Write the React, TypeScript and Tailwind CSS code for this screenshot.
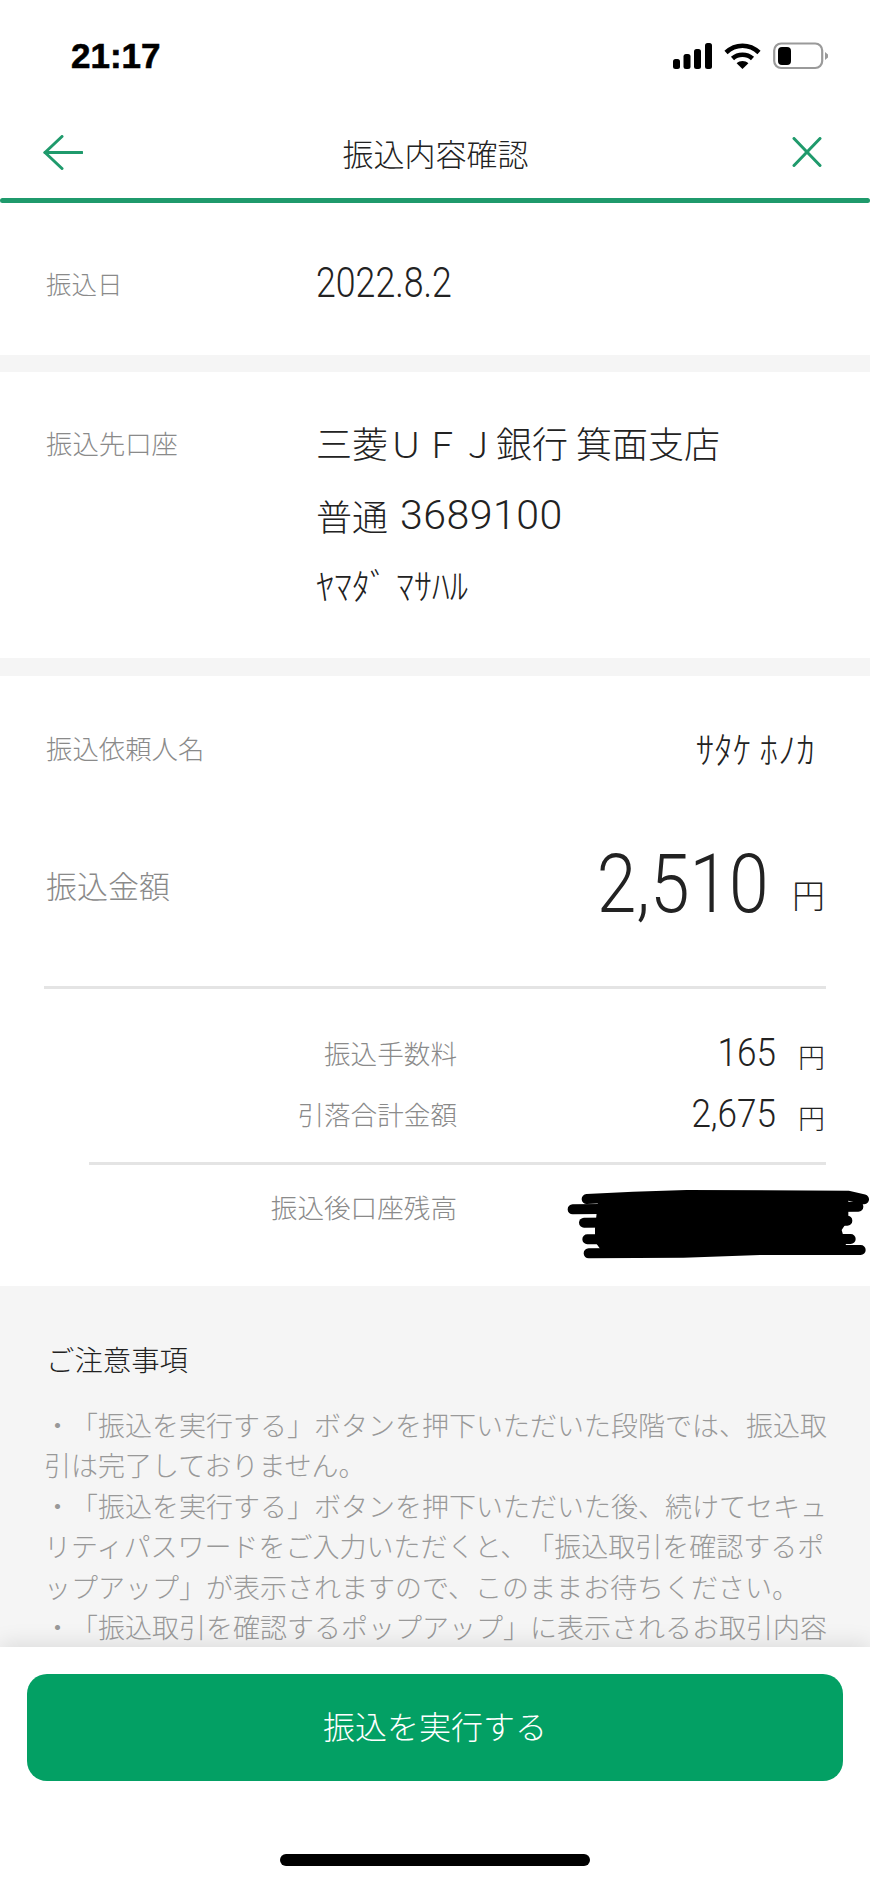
const noteLines = [
  '・「振込を実行する」ボタンを押下いただいた段階では、振込取',
  '引は完了しておりません。',
  '・「振込を実行する」ボタンを押下いただいた後、続けてセキュ',
  'リティパスワードをご入力いただくと、「振込取引を確認するポ',
  'ップアップ」が表示されますので、このままお待ちください。',
  '・「振込取引を確認するポップアップ」に表示されるお取引内容',
];

function StatusIcons() {
  return (
    <div className="flex items-center">
      <svg width="39" height="26" viewBox="0 0 39 26" fill="#000">
        <rect x="0" y="16" width="7" height="10" rx="2.5" />
        <rect x="10.5" y="11" width="7" height="15" rx="2.5" />
        <rect x="21" y="6" width="7" height="20" rx="2.5" />
        <rect x="32" y="0" width="7" height="26" rx="2.5" />
      </svg>
      <svg className="ml-[12px]" width="37" height="26" viewBox="0 0 37 26" fill="none" stroke="#000" strokeWidth="4.6">
        <path d="M2 9.5C11.5 0.5 25.5 0.5 35 9.5" />
        <path d="M8.5 15.5C14 10.5 23 10.5 28.5 15.5" />
        <path d="M18.5 26L12.6 20.2C16 17.4 21 17.4 24.4 20.2Z" fill="#000" stroke="none" />
      </svg>
      <svg className="ml-[12px]" width="56" height="28" viewBox="0 0 56 28" fill="none">
        <rect x="1.2" y="1.5" width="48" height="24.5" rx="7" stroke="#9a9a9a" strokeWidth="2.2" />
        <rect x="5" y="5" width="13" height="18" rx="4" fill="#000" />
        <path d="M52 10L55 12.5V15.5L52 18Z" fill="#9a9a9a" />
      </svg>
    </div>
  );
}

function Yen({ big = false }: { big?: boolean }) {
  return <span className={big ? 'mr-[1px] ml-[23px] text-[33px] leading-none font-light text-[#222] translate-y-[10px]' : 'mr-[1px] ml-[22px] text-[27px] leading-none font-light text-[#222] translate-y-[3px]'}>円</span>;
}

function SubRow({ label, value, className = '' }: { label: string; value?: string; className?: string }) {
  return (
    <div className={`flex h-[40px] items-center ${className}`}>
      <div className="w-[413px] text-right text-[26.6px] leading-none font-light text-[#8a8a8a]">{label}</div>
      {value && (
        <div className="flex flex-1 items-center justify-end">
          <span className="origin-right scale-x-[0.9] font-['Roboto',sans-serif] text-[39px] leading-none font-light text-[#222]">{value}</span>
          <Yen />
        </div>
      )}
    </div>
  );
}

export default function App() {
  return (
    <div className="flex h-[1883px] w-[870px] flex-col overflow-hidden bg-white font-['Noto_Sans_CJK_JP',sans-serif] [text-spacing-trim:space-all]">
      <div className="flex h-[100px] shrink-0 items-start justify-between pt-[42px] pr-[41px] pl-[71px]">
        <span className="font-['Liberation_Sans',sans-serif] text-[35px] leading-[27px] font-bold text-black [-webkit-text-stroke:0.6px_#000]">21:17</span>
        <StatusIcons />
      </div>

      <div className="flex h-[98px] shrink-0 items-center justify-between pt-[6px] pr-[48px] pl-[43px]">
        <svg width="40" height="35" viewBox="0 0 40 35" fill="none" stroke="#1f9a6c" strokeWidth="3" strokeLinecap="round" strokeLinejoin="round">
          <path d="M19 1.5L2 17.5L19 33.5" />
          <path d="M2 17.5H39" />
        </svg>
        <div className="-translate-x-[2px] text-[31px] leading-none font-light text-[#222]">振込内容確認</div>
        <svg width="30" height="30" viewBox="0 0 30 30" fill="none" stroke="#1f9a6c" strokeWidth="3" strokeLinecap="round">
          <path d="M2 1.5L28 28.5" />
          <path d="M28 1.5L2 28.5" />
        </svg>
      </div>
      <div className="h-[5px] shrink-0 rounded-full bg-[#1f9a6c]" />

      <div className="flex h-[152px] shrink-0 items-center px-[46px] pt-[7px]">
        <div className="w-[270px] text-[25.5px] leading-none font-light text-[#8a8a8a]">振込日</div>
        <div className="origin-left scale-x-[0.85] font-['Roboto',sans-serif] text-[42px] leading-none font-light text-[#222]">2022.8.2</div>
      </div>
      <div className="h-[17px] shrink-0 bg-[#f5f5f5]" />

      <div className="flex h-[286px] shrink-0 items-start px-[46px] pt-[52px]">
        <div className="w-[270px] pt-[6px] text-[26.4px] leading-none font-light text-[#8a8a8a]">振込先口座</div>
        <div className="text-[#222]">
          <div className="h-[36px] text-[36px] leading-[36px] font-light">三菱ＵＦＪ銀行 箕面支店</div>
          <div className="mt-[37px] flex h-[36px] items-center text-[36px] leading-[36px] font-light">
            普通
            <span className="ml-[12px] font-['Roboto',sans-serif] text-[41px] leading-none font-light tracking-[0.5px]">3689100</span>
          </div>
          <div className="mt-[33px] text-[36px] leading-[36px] font-light whitespace-pre">ﾔﾏﾀﾞ ﾏｻﾊﾙ</div>
        </div>
      </div>
      <div className="h-[18px] shrink-0 bg-[#f5f5f5]" />

      <div className="relative h-[610px] shrink-0 px-[44px]">
        <div className="flex h-[144px] items-center justify-between">
          <div className="pl-[2px] text-[26.4px] leading-none font-light text-[#8a8a8a]">振込依頼人名</div>
          <div className="pr-[11px] text-[37px] leading-none font-light whitespace-pre text-[#222]">ｻﾀｹ ﾎﾉｶ</div>
        </div>
        <div className="flex h-[128px] items-center justify-between">
          <div className="pl-[2px] text-[31px] leading-none font-light text-[#8a8a8a]">振込金額</div>
          <div className="flex items-center">
            <span className="origin-right scale-x-[0.87] font-['Roboto',sans-serif] text-[82px] leading-none font-light text-[#222]">2,510</span>
            <Yen big />
          </div>
        </div>
        <div className="mt-[38px] h-[3px] bg-[#e4e4e4]" />
        <SubRow className="mt-[44px]" label="振込手数料" value="165" />
        <SubRow className="mt-[21px]" label="引落合計金額" value="2,675" />
        <div className="mt-[28px] ml-[45px] h-[3px] bg-[#e4e4e4]" />
        <SubRow className="mt-[22px]" label="振込後口座残高" />
        {/* hand drawn redaction over the balance */}
        <svg className="absolute top-[494px] left-[540px]" width="330" height="110" viewBox="0 0 990 330" fill="none" stroke="#000" strokeWidth="30" strokeLinecap="round">
          <path d="M140 87L280 80L440 75L925 77L972 88" />
          <path d="M98 118L955 110" />
          <path d="M132 158L922 152" />
          <path d="M142 208L932 207" />
          <path d="M146 250L430 248L660 240L962 240" />
          <path d="M175 85H925V150L905 180L925 250H190L165 215V175Z" fill="#000" stroke="none" />
        </svg>
      </div>

      <div className="min-h-0 flex-1 overflow-hidden bg-[#f5f5f5] px-[47px] pt-[58px]">
        <div className="-ml-[1px] text-[28.4px] leading-[30px] font-light text-[#222]">ご注意事項</div>
        <div className="mt-[31px] -ml-[3px] text-[27px] leading-[40.4px] font-light whitespace-nowrap text-[#999]">
          {noteLines.map((line) => (
            <div key={line}>{line}</div>
          ))}
        </div>
      </div>

      <div className="relative flex h-[236px] shrink-0 flex-col items-center bg-white shadow-[0_-4px_20px_rgba(0,0,0,0.1)]">
        <div className="mt-[27px] flex h-[107px] w-[816px] items-center justify-center rounded-[20px] bg-[#03a064] pb-[6px] text-[32px] leading-none font-light text-white">振込を実行する</div>
        <div className="mt-[73px] h-[12px] w-[310px] rounded-full bg-black" />
      </div>
    </div>
  );
}
